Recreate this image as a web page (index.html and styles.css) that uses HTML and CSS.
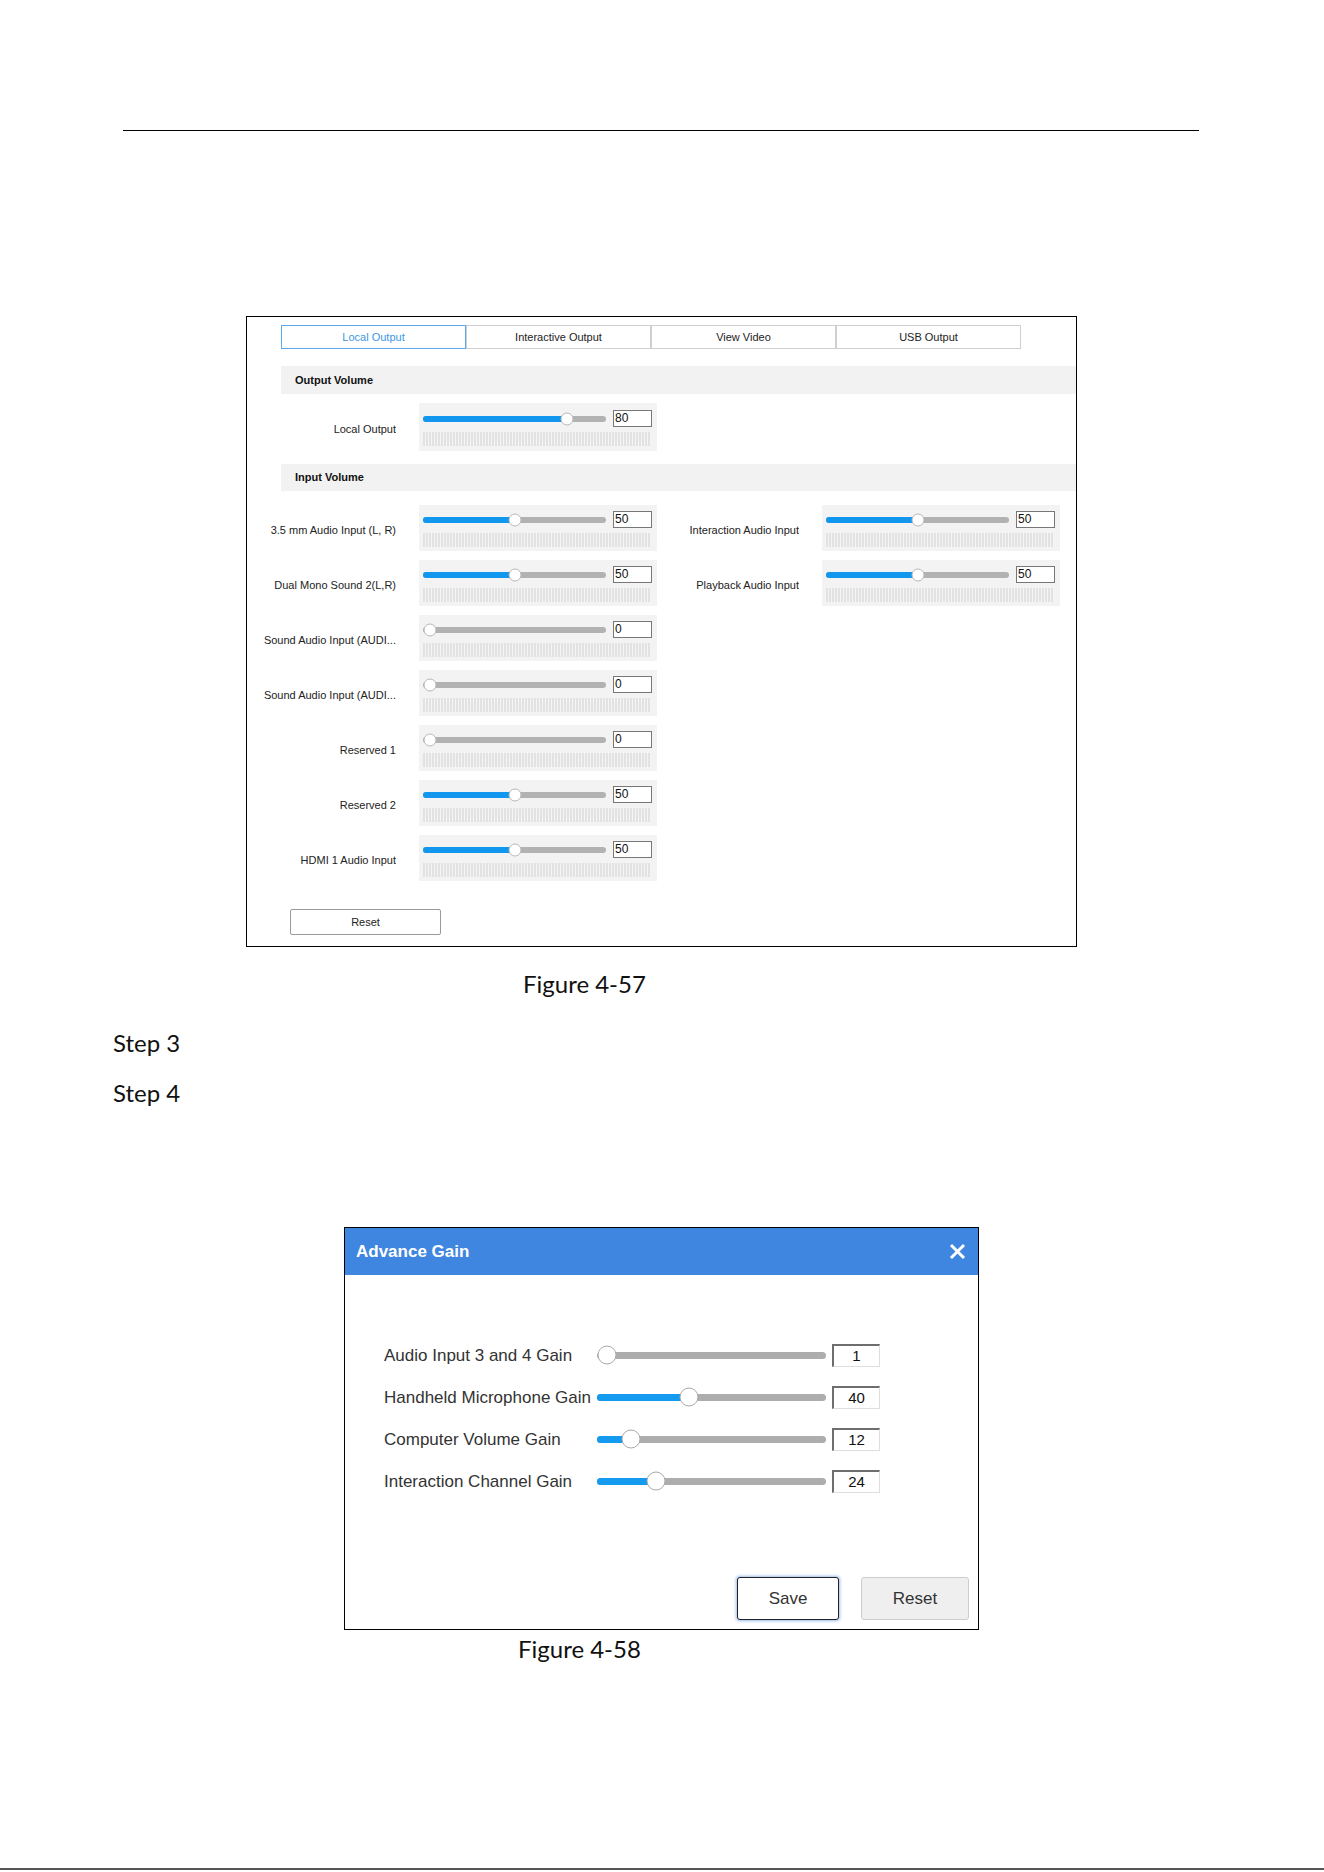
FILE: index.html
```
<html>
    <head>
        <title>Audio volume settings</title>
        <meta charset="UTF-8" />
        <link rel="stylesheet" href="styles.css">
    </head>
    <body>
        <div class="page">
            <div class="top-rule"></div>

            <!-- Figure 4-57: volume settings panel -->
            <div class="fig1">
                <div class="tabs">
                    <div class="tab active">Local Output</div>
                    <div class="tab">Interactive Output</div>
                    <div class="tab">View Video</div>
                    <div class="tab">USB Output</div>
                </div>

                <div class="section-head first">Output Volume</div>
                <div class="out-rows">
                    <div class="row">
                        <div class="label">Local Output</div>
                        <div class="slider-panel tall">
                            <div class="slider-line">
                                <div class="track"><div class="fill" style="width: 144px"></div><div class="thumb" style="left: 144px"></div></div>
                                <div class="num">80</div>
                            </div>
                            <div class="meter"></div>
                        </div>
                    </div>
                </div>

                <div class="section-head second">Input Volume</div>
                <div class="in-grid">
                    <div class="col">
                        <div class="row">
                            <div class="label">3.5 mm Audio Input (L, R)</div>
                            <div class="slider-panel">
                                <div class="slider-line">
                                    <div class="track"><div class="fill" style="width: 91.5px"></div><div class="thumb" style="left: 91.5px"></div></div>
                                    <div class="num">50</div>
                                </div>
                                <div class="meter"></div>
                            </div>
                        </div>
                        <div class="row">
                            <div class="label">Dual Mono Sound 2(L,R)</div>
                            <div class="slider-panel">
                                <div class="slider-line">
                                    <div class="track"><div class="fill" style="width: 91.5px"></div><div class="thumb" style="left: 91.5px"></div></div>
                                    <div class="num">50</div>
                                </div>
                                <div class="meter"></div>
                            </div>
                        </div>
                        <div class="row">
                            <div class="label">Sound Audio Input (AUDI...</div>
                            <div class="slider-panel">
                                <div class="slider-line">
                                    <div class="track"><div class="thumb" style="left: 6.5px"></div></div>
                                    <div class="num">0</div>
                                </div>
                                <div class="meter"></div>
                            </div>
                        </div>
                        <div class="row">
                            <div class="label">Sound Audio Input (AUDI...</div>
                            <div class="slider-panel">
                                <div class="slider-line">
                                    <div class="track"><div class="thumb" style="left: 6.5px"></div></div>
                                    <div class="num">0</div>
                                </div>
                                <div class="meter"></div>
                            </div>
                        </div>
                        <div class="row">
                            <div class="label">Reserved 1</div>
                            <div class="slider-panel">
                                <div class="slider-line">
                                    <div class="track"><div class="thumb" style="left: 6.5px"></div></div>
                                    <div class="num">0</div>
                                </div>
                                <div class="meter"></div>
                            </div>
                        </div>
                        <div class="row">
                            <div class="label">Reserved 2</div>
                            <div class="slider-panel">
                                <div class="slider-line">
                                    <div class="track"><div class="fill" style="width: 91.5px"></div><div class="thumb" style="left: 91.5px"></div></div>
                                    <div class="num">50</div>
                                </div>
                                <div class="meter"></div>
                            </div>
                        </div>
                        <div class="row">
                            <div class="label">HDMI 1 Audio Input</div>
                            <div class="slider-panel">
                                <div class="slider-line">
                                    <div class="track"><div class="fill" style="width: 91.5px"></div><div class="thumb" style="left: 91.5px"></div></div>
                                    <div class="num">50</div>
                                </div>
                                <div class="meter"></div>
                            </div>
                        </div>
                    </div>
                    <div class="col">
                        <div class="row">
                            <div class="label">Interaction Audio Input</div>
                            <div class="slider-panel">
                                <div class="slider-line">
                                    <div class="track"><div class="fill" style="width: 91.5px"></div><div class="thumb" style="left: 91.5px"></div></div>
                                    <div class="num">50</div>
                                </div>
                                <div class="meter"></div>
                            </div>
                        </div>
                        <div class="row">
                            <div class="label">Playback Audio Input</div>
                            <div class="slider-panel">
                                <div class="slider-line">
                                    <div class="track"><div class="fill" style="width: 91.5px"></div><div class="thumb" style="left: 91.5px"></div></div>
                                    <div class="num">50</div>
                                </div>
                                <div class="meter"></div>
                            </div>
                        </div>
                    </div>
                </div>

                <button class="btn-reset">Reset</button>
            </div>
            <div class="caption cap1">Figure 4-57</div>

            <div class="step s3">Step 3</div>
            <div class="step s4">Step 4</div>

            <!-- Figure 4-58: Advance Gain dialog -->
            <div class="fig2">
                <div class="dlg-head">
                    <span class="dlg-title">Advance Gain</span>
                    <svg class="dlg-close" width="17" height="17" viewBox="0 0 17 17">
                        <path d="M2 2 L15 15 M15 2 L2 15" stroke="#fff" stroke-width="3" fill="none" />
                    </svg>
                </div>
                <div class="dlg-body">
                    <div class="gain-row">
                        <div class="gain-label">Audio Input 3 and 4 Gain</div>
                        <div class="gtrack"><div class="gthumb" style="left: 10px"></div></div>
                        <div class="gnum">1</div>
                    </div>
                    <div class="gain-row">
                        <div class="gain-label">Handheld Microphone Gain</div>
                        <div class="gtrack"><div class="gfill" style="width: 92px"></div><div class="gthumb" style="left: 92px"></div></div>
                        <div class="gnum">40</div>
                    </div>
                    <div class="gain-row">
                        <div class="gain-label">Computer Volume Gain</div>
                        <div class="gtrack"><div class="gfill" style="width: 34px"></div><div class="gthumb" style="left: 34px"></div></div>
                        <div class="gnum">12</div>
                    </div>
                    <div class="gain-row">
                        <div class="gain-label">Interaction Channel Gain</div>
                        <div class="gtrack"><div class="gfill" style="width: 59px"></div><div class="gthumb" style="left: 59px"></div></div>
                        <div class="gnum">24</div>
                    </div>
                    <div class="dlg-actions">
                        <button class="btn-save">Save</button>
                        <button class="btn-dlg-reset">Reset</button>
                    </div>
                </div>
            </div>
            <div class="caption cap2">Figure 4-58</div>

            <div class="bottom-rule"></div>
        </div>
    </body>
</html>
```

FILE: styles.css
```
body {
    margin: 0;
    background: #fff;
    color: #222;
    font-family: "Liberation Sans", Arial, sans-serif;
}
.page {
    width: 1324px;
    height: 1872px;
    padding-top: 130px;
    box-sizing: border-box;
    overflow: hidden;
}
.top-rule {
    margin-left: 123px;
    width: 1076px;
    border-top: 1px solid #000;
}

/* Figure 4-57 */
.fig1 {
    margin: 185px 0 0 246px;
    width: 831px;
    height: 631px;
    box-sizing: border-box;
    border: 1px solid #000;
    font-size: 11px;
}
.tabs {
    display: flex;
    margin: 8px 0 0 34px;
}
.tab {
    width: 185px;
    height: 24px;
    box-sizing: border-box;
    border: 1px solid #cfcfcf;
    text-align: center;
    line-height: 22px;
    color: #222;
}
.tab.active {
    border-color: #5aa9ec;
    color: #3a97e6;
}
.section-head {
    margin-left: 34px;
    padding-left: 14px;
    background: #f2f2f2;
    font-weight: bold;
    color: #111;
}
.section-head.first {
    margin-top: 17px;
    height: 28px;
    line-height: 28px;
}
.section-head.second {
    margin-top: 13px;
    height: 27px;
    line-height: 27px;
}
.out-rows {
    margin-top: 9px;
    padding-left: 8px;
}
.in-grid {
    display: flex;
    margin-top: 14px;
    padding-left: 8px;
}
.col {
    width: 403px;
    display: flex;
    flex-direction: column;
    gap: 9px;
}
.row {
    display: flex;
    align-items: center;
}
.label {
    width: 141px;
    margin-right: 23px;
    text-align: right;
    white-space: nowrap;
    overflow: hidden;
    padding-top: 3px;
    color: #222;
}
.slider-panel {
    width: 238px;
    height: 46px;
    box-sizing: border-box;
    padding: 6px 5px 0 4px;
    background: #f3f3f3;
}
.slider-panel.tall {
    height: 48px;
    padding-top: 7px;
}
.slider-line {
    display: flex;
    align-items: center;
    height: 17px;
}
.track {
    position: relative;
    width: 183px;
    height: 6px;
    border-radius: 3px;
    background: #b2b2b2;
    margin-right: 7px;
}
.fill {
    height: 6px;
    border-radius: 3px;
    background: #1297ee;
}
.thumb {
    position: absolute;
    top: 50%;
    width: 13px;
    height: 13px;
    box-sizing: border-box;
    border: 1px solid #b8b8b8;
    border-radius: 50%;
    background: #fff;
    transform: translate(-50%, -50%);
}
.num {
    width: 39px;
    height: 17px;
    box-sizing: border-box;
    border: 1px solid #777;
    background: #fff;
    font-size: 12px;
    line-height: 15px;
    padding-left: 1px;
    color: #111;
}
.meter {
    margin-top: 5px;
    width: 228px;
    height: 14px;
    background: repeating-linear-gradient(
        90deg,
        #e2e2e2 0 2px,
        #f4f4f4 2px 3px
    );
}
.btn-reset {
    display: block;
    margin: 28px 0 0 43px;
    width: 151px;
    height: 26px;
    border: 1px solid #9a9a9a;
    border-radius: 2px;
    background: #fff;
    font-family: "Liberation Sans", Arial, sans-serif;
    font-size: 11px;
    color: #222;
}

/* captions and steps, document text */
.caption,
.step {
    font-family: Lato, "Open Sans", sans-serif;
    font-size: 24px;
    line-height: 29px;
    color: #111;
}
.cap1 {
    margin-top: 22px;
    padding-left: 523px;
}
.s3 {
    margin-top: 30px;
    padding-left: 113px;
}
.s4 {
    margin-top: 21px;
    padding-left: 113px;
}
.cap2 {
    margin-top: 4px;
    padding-left: 518px;
}

/* Figure 4-58 */
.fig2 {
    margin: 120px 0 0 344px;
    width: 635px;
    height: 403px;
    box-sizing: border-box;
    border: 1px solid #000;
}
.dlg-head {
    height: 47px;
    background: #3f86e0;
    display: flex;
    align-items: center;
    justify-content: space-between;
    padding: 0 12px 0 11px;
}
.dlg-title {
    color: #fff;
    font-weight: bold;
    font-size: 17px;
}
.dlg-body {
    padding: 59px 0 0 39px;
}
.gain-row {
    display: flex;
    align-items: center;
    height: 42px;
}
.gain-label {
    width: 213px;
    white-space: nowrap;
    font-size: 17px;
    color: #333;
    padding-top: 2px;
}
.gtrack {
    position: relative;
    width: 229px;
    height: 7px;
    border-radius: 4px;
    background: #adadad;
    margin-right: 6px;
}
.gfill {
    height: 7px;
    border-radius: 4px;
    background: #149aef;
}
.gthumb {
    position: absolute;
    top: 50%;
    width: 19px;
    height: 19px;
    box-sizing: border-box;
    border: 1px solid #a9a9a9;
    border-radius: 50%;
    background: #fff;
    transform: translate(-50%, -50%);
}
.gnum {
    width: 48px;
    height: 23px;
    box-sizing: border-box;
    border-top: 2px solid #6e6e6e;
    border-left: 2px solid #6e6e6e;
    border-right: 1px solid #dedede;
    border-bottom: 1px solid #dedede;
    text-align: center;
    font-size: 15px;
    line-height: 20px;
    color: #111;
}
.dlg-actions {
    display: flex;
    justify-content: flex-end;
    gap: 22px;
    margin-top: 75px;
    padding-right: 9px;
}
.btn-save,
.btn-dlg-reset {
    height: 43px;
    font-family: "Liberation Sans", Arial, sans-serif;
    font-size: 17px;
    color: #333;
    border-radius: 3px;
}
.btn-save {
    width: 102px;
    background: #fff;
    border: 1px solid #222;
    box-shadow: 0 0 3px 1px rgba(70, 130, 220, 0.55);
}
.btn-dlg-reset {
    width: 108px;
    background: #efefef;
    border: 1px solid #cdcdcd;
}

.bottom-rule {
    margin-top: 205px;
    height: 2px;
    background: #555;
}
```
